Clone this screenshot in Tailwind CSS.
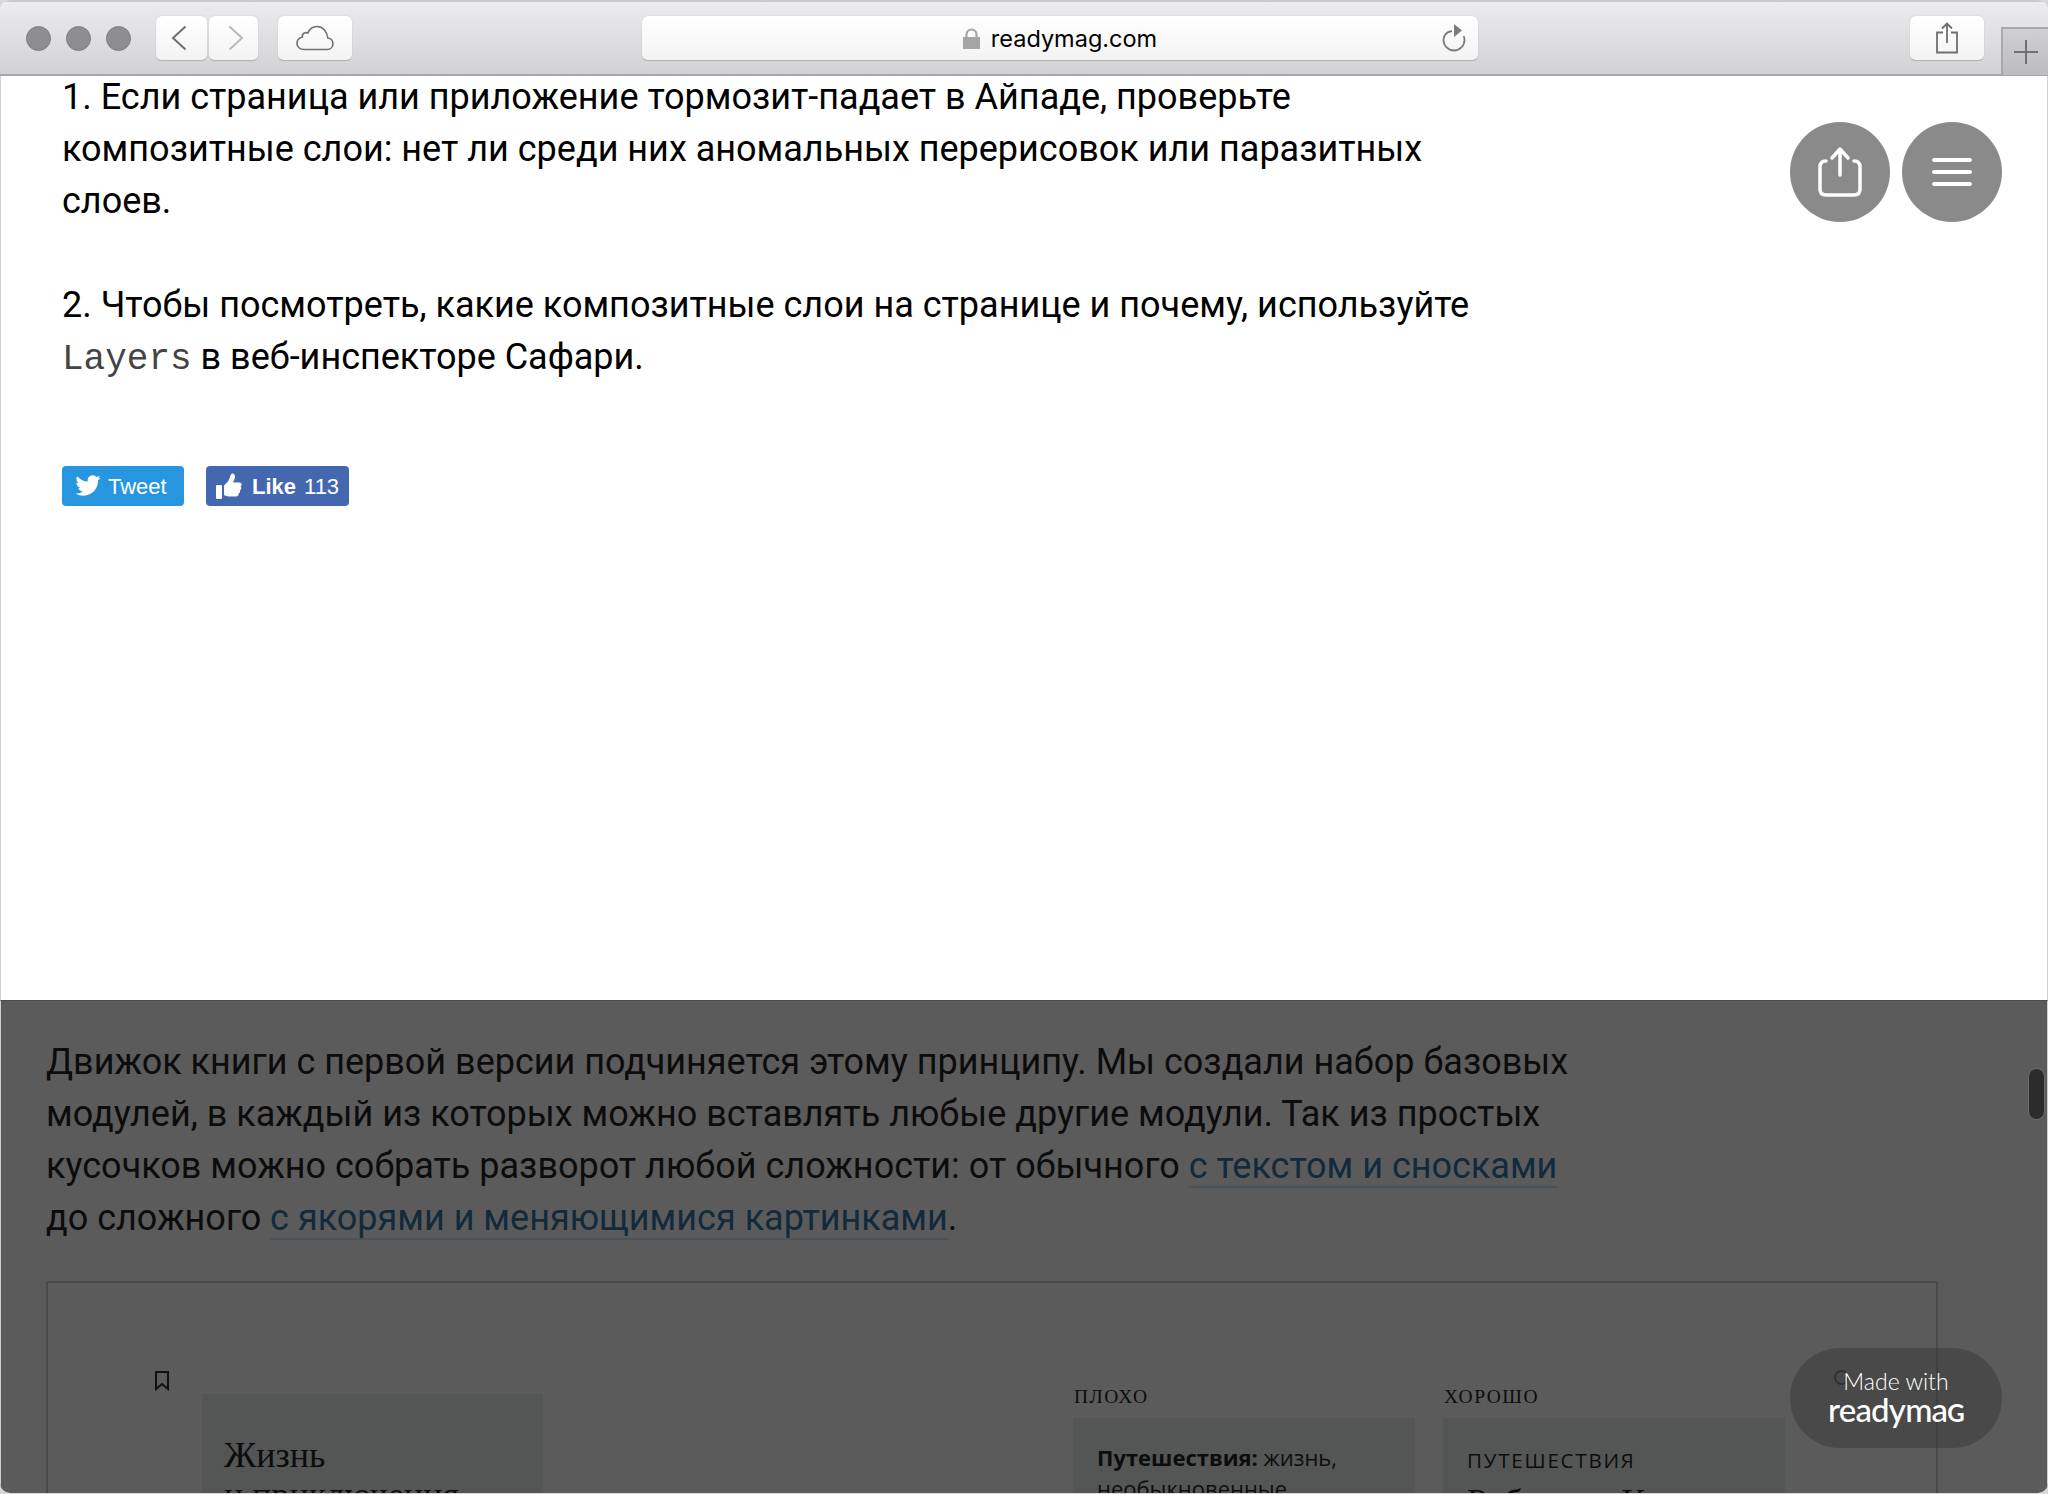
<!DOCTYPE html>
<html lang="ru">
<head>
<meta charset="utf-8">
<title>readymag.com</title>
<script src="https://cdn.jsdelivr.net/npm/@tailwindcss/browser@4"></script>
</head>
<body class="bg-[#d8d8da]">
<div class="relative w-[2048px] h-[1493px] overflow-hidden flex flex-col rounded-[10px] bg-white font-['Roboto',sans-serif]">

  <!-- Browser toolbar -->
  <header class="relative z-10 h-[76px] shrink-0 flex items-start bg-gradient-to-b from-[#ecebee] to-[#d2d1d4] border-t-2 border-t-[#c9c9cb] border-b-2 border-b-[#a6a6a6]">
    <div class="flex gap-[15px] ml-[26px] mt-[24px]">
      <span class="w-[25px] h-[25px] rounded-full bg-[#8e8e90] border border-[#7d7d7f]"></span>
      <span class="w-[25px] h-[25px] rounded-full bg-[#8e8e90] border border-[#7d7d7f]"></span>
      <span class="w-[25px] h-[25px] rounded-full bg-[#8e8e90] border border-[#7d7d7f]"></span>
    </div>

    <div class="flex gap-[2px] ml-[25px] mt-[14px]">
      <button class="w-[51px] h-[45px] pr-[5px] flex items-center justify-center rounded-[6px] bg-gradient-to-b from-white to-[#f3f3f3] border-b border-b-[#b5b5b5] shadow-[0_0_1px_rgba(0,0,0,0.3)]">
        <svg width="16" height="26" viewBox="0 0 16 26" fill="none" stroke="#6f6f6f" stroke-width="2"><path d="M14.500 1.500 2 13l12.500 11.500"/></svg>
      </button>
      <button class="w-[49px] h-[45px] pl-[4px] flex items-center justify-center rounded-[6px] bg-gradient-to-b from-white to-[#f3f3f3] border-b border-b-[#b5b5b5] shadow-[0_0_1px_rgba(0,0,0,0.3)]">
        <svg width="16" height="26" viewBox="0 0 16 26" fill="none" stroke="#b9b9b9" stroke-width="2"><path d="M1.500 1.500 14 13 1.500 24.500"/></svg>
      </button>
    </div>

    <button class="w-[74px] h-[45px] ml-[20px] mt-[14px] flex items-center justify-center rounded-[6px] bg-gradient-to-b from-white to-[#f3f3f3] border-b border-b-[#b5b5b5] shadow-[0_0_1px_rgba(0,0,0,0.3)]">
      <svg width="38" height="26" viewBox="0 0 38 26" fill="none" stroke="#6f6f6f" stroke-width="1.6"><path d="M8 24.500h23c3.600 0 6-2.600 6-5.800 0-3-2.200-5.400-5.200-5.700C31 6.300 26.800 1.500 21 1.500c-4.400 0-7.700 2.700-9.200 6.600-1-.5-2-.7-3-.3-1.800.6-2.700 2.300-2.500 4.300C3.200 12.900 1 15.400 1 18.500c0 3.300 2.800 6 7 6Z"/></svg>
    </button>

    <div class="relative w-[836px] h-[45px] ml-[290px] mt-[14px] flex items-center justify-center rounded-[6px] bg-gradient-to-b from-white to-[#f3f3f3] border-b border-b-[#b5b5b5] shadow-[0_0_1px_rgba(0,0,0,0.3)]">
      <svg class="mr-[11px]" width="17" height="21" viewBox="0 0 17 21"><path fill="#a5a5a5" d="M0 9h17v12H0z"/><path fill="none" stroke="#a5a5a5" stroke-width="2.200" d="M3.500 10V6.500a5 5 0 0 1 10 0V10"/></svg>
      <span class="text-[23.500px] leading-none pt-[2px] text-black font-['Inter',sans-serif]">readymag.com</span>
      <svg class="absolute right-[11px] top-[7px]" width="26" height="30" viewBox="0 0 26 30" fill="none"><path stroke="#7c7c7c" stroke-width="1.800" d="M11 8C5.500 9 2.500 12.500 2.500 17a10.500 10.500 0 0 0 21 0c0-1.500-.3-2.800-.8-4"/><path fill="#7c7c7c" d="M13 1l8 6.500-8 6.500z"/></svg>
    </div>

    <button class="w-[74px] h-[45px] ml-[432px] mt-[14px] flex items-center justify-center rounded-[6px] bg-gradient-to-b from-white to-[#f3f3f3] border-b border-b-[#b5b5b5] shadow-[0_0_1px_rgba(0,0,0,0.3)]">
      <svg width="24" height="32" viewBox="0 0 24 32" fill="none" stroke="#6f6f6f" stroke-width="1.800"><path d="M8 10.500H2v20h20v-20h-6M12 21V1.500M7 6.500l5-5 5 5"/></svg>
    </button>

    <div class="w-[47px] h-[48px] ml-[17px] mt-[25px] flex items-center justify-center bg-gradient-to-b from-[#d0cfd2] to-[#bcbbbe] border-l-2 border-t-2 border-[#a9a9ab]">
      <svg width="24" height="24" viewBox="0 0 24 24" stroke="#6f6f6f" stroke-width="2"><path d="M0 12h24M12 0v24"/></svg>
    </div>
  </header>

  <!-- White page part -->
  <main class="h-[930px] shrink-0 -mt-[6px] pl-[61px] pt-[1px] border-x border-[#d0d0d0] text-black">
    <div class="text-[36px] leading-[52px] text-black">
      <p>1. Если страница или приложение тормозит-падает в Айпаде, проверьте<br>композитные слои: нет ли среди них аномальных перерисовок или паразитных<br>слоев.</p>
      <p class="mt-[52px]">2. Чтобы посмотреть, какие композитные слои на странице и почему, используйте<br><code class="font-['Liberation_Mono',monospace] text-[#444] text-[36px]">Layers</code> в веб-инспекторе Сафари.</p>
    </div>

    <div class="flex gap-[22px] mt-[80px] font-['Liberation_Sans',sans-serif] text-white text-[22px]">
      <a class="w-[122px] h-[40px] flex items-center pl-[13px] gap-[7px] rounded-[4px] bg-[#2796df]">
        <svg width="26" height="22" viewBox="0 0 24 21" fill="#fff"><path d="M23.953 2.570a10 10 0 0 1-2.825.775 4.958 4.958 0 0 0 2.163-2.723c-.951.555-2.005.959-3.127 1.184a4.920 4.920 0 0 0-8.384 4.482C7.690 6.095 4.067 4.130 1.640 1.162a4.822 4.822 0 0 0-.666 2.475c0 1.710.870 3.213 2.188 4.096a4.904 4.904 0 0 1-2.228-.616v.060a4.923 4.923 0 0 0 3.946 4.827 4.996 4.996 0 0 1-2.212.085 4.936 4.936 0 0 0 4.604 3.417 9.867 9.867 0 0 1-6.102 2.105c-.390 0-.779-.023-1.170-.067a13.995 13.995 0 0 0 7.557 2.209c9.053 0 13.998-7.496 13.998-13.985 0-.210 0-.420-.015-.630A9.935 9.935 0 0 0 24 2.590z"/></svg>
        <span>Tweet</span>
      </a>
      <a class="w-[143px] h-[40px] flex items-center pl-[10px] rounded-[4px] bg-[#4468b0]">
        <svg width="26" height="26" viewBox="0 0 26 26" fill="#fff"><rect x="0" y="12" width="6" height="14" rx="1"/><path d="M8 12.500c3-2.500 5-5 6-8.500.4-1.600 1-3.500 2.500-3.500 2.500 0 3 3 2 5.500l-1.500 3.500h6.500c2.500 0 3 3 1 4 1.300 1.300.8 3.200-.8 3.800.8 1.300.1 2.900-1.200 3.200.5 1.500-.5 3-2.500 3H13c-2 0-3.500-1-5-1.500z"/></svg>
        <span class="font-bold ml-[10px]">Like</span>
        <span class="ml-[8px]">113</span>
      </a>
    </div>
  </main>

  <!-- Dimmed part of the page below -->
  <section class="relative flex-1 overflow-hidden bg-[#5b5b5b] text-[#0c0c0c] border-x border-x-[#d0d0d0] border-t border-t-[#4a4a4a]">
    <p class="ml-[45px] mt-[35px] text-[36px] leading-[52px]">Движок книги с первой версии подчиняется этому принципу. Мы создали набор базовых<br>модулей, в каждый из которых можно вставлять любые другие модули. Так из простых<br>кусочков можно собрать разворот любой сложности: от обычного <a class="text-[#122a3a] underline decoration-2 decoration-[#4a5359] underline-offset-[8px]">с текстом и сносками</a><br>до сложного <a class="text-[#122a3a] underline decoration-2 decoration-[#4a5359] underline-offset-[8px]">с якорями и меняющимися картинками</a>.</p>

    <div class="ml-[45px] mt-[37px] w-[1892px] h-[300px] border-2 border-[#4a4a4a] flex font-['Liberation_Serif',serif]">
      <svg class="ml-[106px] mt-[88px] shrink-0" width="16" height="20" viewBox="0 0 16 20" fill="none" stroke="#101010" stroke-width="2"><path d="M2 1h12v17l-6-5-6 5z"/></svg>
      <div class="ml-[32px] mt-[111px] w-[341px] h-[200px] shrink-0 bg-[#545655] pl-[22px] pt-[41px]">
        <p class="text-[36px] leading-[40px]">Жизнь<br>и приключения</p>
      </div>
      <div class="ml-[530px] mt-[104px] w-[342px] shrink-0">
        <p class="text-[19.500px] leading-[20px] tracking-[1.500px] pl-[1px]">ПЛОХО</p>
        <div class="mt-[11px] h-[200px] bg-[#545655] pl-[24px] pt-[24px] font-['Open_Sans',sans-serif] text-[22px] leading-[31px]">
          <p><b>Путешествия:</b> жизнь,<br>необыкновенные</p>
        </div>
      </div>
      <div class="ml-[28px] mt-[104px] w-[342px] shrink-0">
        <p class="text-[19.500px] leading-[20px] tracking-[1.500px] pl-[1px]">ХОРОШО</p>
        <div class="mt-[11px] h-[200px] bg-[#545655] pl-[24px] pt-[30px]">
          <p class="font-['Open_Sans',sans-serif] text-[20.500px] leading-[24px] tracking-[1.800px]">ПУТЕШЕСТВИЯ</p>
          <p class="text-[36px] leading-[44px] mt-[8px]">Робинзон К</p>
        </div>
      </div>
    </div>

    <!-- Scrollbar -->
    <span class="absolute left-[2027px] top-[67px] w-[17px] h-[52px] rounded-full bg-[#2c2c2c] border border-[#6e6e6e]"></span>
    <!-- Small ring behind the badge -->
    <span class="absolute left-[1833px] top-[369px] w-[15px] h-[15px] rounded-full border-2 border-[#333]"></span>
  </section>

  <!-- Floating buttons over the page -->
  <div class="absolute left-[1790px] top-[122px] flex gap-[12px]">
    <button class="w-[100px] h-[100px] rounded-full bg-[#8a8a8a] flex items-center justify-center">
      <svg width="46" height="50" viewBox="0 0 46 50" fill="none" stroke="#fff" stroke-width="3.500" stroke-linecap="round" stroke-linejoin="round"><path d="M9 14c-4 0-6 2-6 6v22c0 4 2 6 6 6h28c4 0 6-2 6-6V20c0-4-2-6-6-6M23 28V3M15 11l8-9 8 9"/></svg>
    </button>
    <button class="w-[100px] h-[100px] rounded-full bg-[#8a8a8a] flex flex-col items-center justify-center gap-[8px]">
      <span class="w-[40px] h-[4px] rounded-[2px] bg-white"></span>
      <span class="w-[40px] h-[4px] rounded-[2px] bg-white"></span>
      <span class="w-[40px] h-[4px] rounded-[2px] bg-white"></span>
    </button>
  </div>

  <!-- Made with readymag badge -->
  <a class="absolute left-[1790px] top-[1348px] w-[212px] h-[100px] rounded-full bg-[#303030]/40 flex flex-col items-center justify-center text-white">
    <span class="font-['Lato',sans-serif] font-light text-[23px] leading-[26px]">Made with</span>
    <span class="font-['Lato',sans-serif] font-medium text-[33px] leading-[30px] tracking-[-0.8px]">readyma<span class="text-[24px] font-bold uppercase">g</span></span>
  </a>
</div>
</body>
</html>
